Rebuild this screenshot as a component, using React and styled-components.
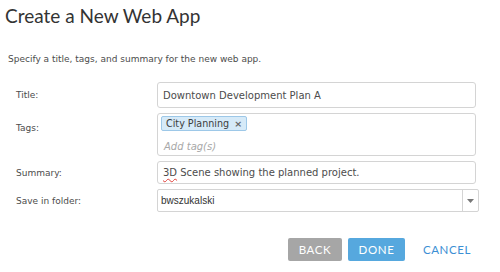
import React from 'react';
import styled, { createGlobalStyle } from 'styled-components';

const GlobalStyle = createGlobalStyle`
  body {
    margin: 0;
    background: #fff;
    font-family: 'DejaVu Sans', Verdana, sans-serif;
  }
`;

const Dialog = styled.div`
  width: 500px;
  height: 272px;
  box-sizing: border-box;
  padding: 4px 0 0 0;
  overflow: hidden;
`;

const Heading = styled.h1`
  margin: 0 0 0 5px;
  font-family: Lato, 'Open Sans', sans-serif;
  font-weight: 400;
  font-size: 19px;
  line-height: 23px;
  color: #333;
`;

const Intro = styled.p`
  margin: 25px 0 0 8px;
  font-size: 9px;
  line-height: 14px;
  color: #4c4c4c;
`;

const Form = styled.div`
  display: grid;
  grid-template-columns: 157px 319px;
  row-gap: 5px;
  margin-top: 16px;
`;

const Label = styled.div`
  padding-left: 16px;
  font-size: 9px;
  color: #4c4c4c;
  display: flex;
  align-items: ${(p) => (p.$top ? 'flex-start' : 'center')};
  padding-top: ${(p) => (p.$top ? '10px' : '0')};
`;

const Field = styled.div`
  height: ${(p) => p.$h || 24}px;
  box-sizing: border-box;
  border: 1px solid #d4d4d4;
  border-radius: 3px;
  padding: 0 5px;
  display: flex;
  align-items: center;
  font-size: 10px;
  color: #4c4c4c;
`;

const TagBox = styled(Field)`
  flex-direction: column;
  align-items: flex-start;
  justify-content: space-between;
  padding: 2px 3px 3px;
`;

const Chip = styled.span`
  display: inline-flex;
  align-items: center;
  gap: 5px;
  height: 15px;
  box-sizing: border-box;
  padding: 0 4px;
  background: #d6eaf8;
  border: 1px solid #9dc8e8;
  border-radius: 2px;
  color: #3d3d3d;
  font-size: 9.6px;
`;

const ChipClose = styled.span`
  font-size: 9.5px;
  color: #666;
  font-weight: 700;
`;

const Placeholder = styled.span`
  font-style: italic;
  color: #a8a8a8;
  padding-left: 3px;
`;

const Misspelled = styled.span`
  text-decoration: underline wavy #e0403a;
  text-decoration-thickness: 1px;
  text-underline-offset: 2px;
`;

const Select = styled.div`
  width: 322px;
  height: 23px;
  box-sizing: border-box;
  border: 1px solid #d4d4d4;
  border-radius: 2px;
  display: flex;
  font-family: 'Liberation Sans', Arial, sans-serif;
  font-size: 10px;
  color: #333;
`;

const SelectValue = styled.div`
  flex: 1;
  display: flex;
  align-items: center;
  padding-left: 3px;
`;

const SelectArrow = styled.div`
  width: 15px;
  border-left: 1px solid #d4d4d4;
  display: flex;
  align-items: center;
  justify-content: center;
`;

const Actions = styled.div`
  display: flex;
  justify-content: flex-end;
  align-items: center;
  gap: 6px;
  margin-top: 26px;
  padding-right: 21px;
`;

const Button = styled.button`
  height: 23px;
  min-width: ${(p) => p.$w || 54}px;
  margin-left: ${(p) => p.$gap || 0}px;
  border: none;
  border-radius: 2px;
  background: ${(p) => p.$bg || 'transparent'};
  color: ${(p) => p.$fg || '#fff'};
  font-family: Lato, 'Open Sans', sans-serif;
  font-size: 11.5px;
  letter-spacing: 0.6px;
  padding: 0 7px;
  cursor: pointer;
`;

export default function App() {
  return (
    <>
      <GlobalStyle />
      <Dialog>
        <Heading>Create a New Web App</Heading>
        <Intro>Specify a title, tags, and summary for the new web app.</Intro>
        <Form>
          <Label>Title:</Label>
          <Field $h={26}>Downtown Development Plan A</Field>
          <Label $top>Tags:</Label>
          <TagBox $h={43}>
            <Chip>
              City Planning <ChipClose>×</ChipClose>
            </Chip>
            <Placeholder>Add tag(s)</Placeholder>
          </TagBox>
          <Label>Summary:</Label>
          <Field $h={23}>
            <span>
              <Misspelled>3D</Misspelled> Scene showing the planned project.
            </span>
          </Field>
          <Label>Save in folder:</Label>
          <Select>
            <SelectValue>bwszukalski</SelectValue>
            <SelectArrow>
              <svg width="7" height="4" viewBox="0 0 7 4">
                <path d="M0 0h7L3.5 4z" fill="#777" />
              </svg>
            </SelectArrow>
          </Select>
        </Form>
        <Actions>
          <Button $bg="#a6a6a6" $w={54}>BACK</Button>
          <Button $bg="#56a8de" $w={57}>DONE</Button>
          <Button $fg="#3b8fd4" $w={64} $gap={4}>CANCEL</Button>
        </Actions>
      </Dialog>
    </>
  );
}
